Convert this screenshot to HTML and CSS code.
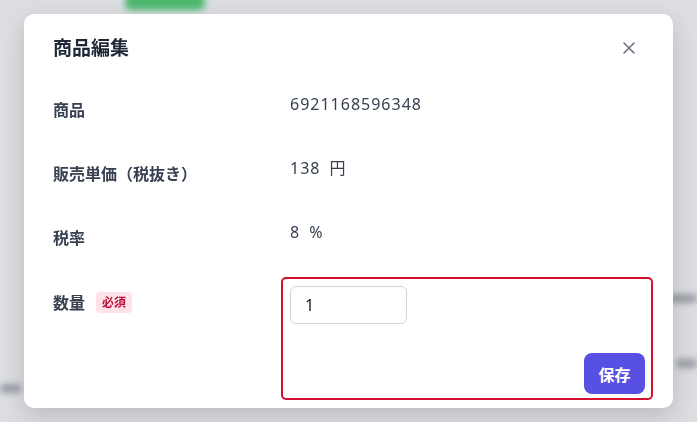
FILE: index.html
```html
<!DOCTYPE html>
<html lang="ja">
<head>
    <meta charset="UTF-8">
    <meta name="viewport" content="width=device-width, initial-scale=1.0">
    <title>商品編集</title>
    <link rel="stylesheet" href="styles.css">
</head>
<body>

    <!-- 背景のページ -->
    <div class="page">
        <div class="page-top">
            <span class="page-btn"></span>
        </div>
        <div class="page-line line-a"></div>
        <div class="page-line line-b"></div>
        <div class="page-line line-c"></div>
    </div>

    <!-- モーダル -->
    <div class="overlay">
        <div class="modal">
            <div class="modal-header">
                <h2>商品編集</h2>
                <button class="close-btn" aria-label="閉じる">
                    <svg width="14" height="14" viewBox="0 0 14 14">
                        <path d="M2 2 L12 12 M12 2 L2 12" stroke="#6b7280" stroke-width="1.6" stroke-linecap="round" fill="none"/>
                    </svg>
                </button>
            </div>

            <div class="form-grid">
                <div class="label">商品</div>
                <div class="value">6921168596348</div>

                <div class="label">販売単価（税抜き）</div>
                <div class="value">138<span class="unit">円</span></div>

                <div class="label">税率</div>
                <div class="value">8<span class="unit">%</span></div>

                <div class="label">数量 <span class="badge">必須</span></div>
                <div class="field-box">
                    <input type="text" class="qty-input" value="1">
                    <button class="save-btn">保存</button>
                </div>
            </div>
        </div>
    </div>

</body>
</html>
```

FILE: styles.css
```css
body {
    margin: 0;
    font-family: "Noto Sans", "Noto Sans CJK JP", sans-serif;
    background-color: #dcdee2;
    color: #374151;
    overflow: hidden;
}

/* 背景のページ */
.page {
    height: 422px;
    filter: blur(3px);
}

.page-top {
    height: 30px;
    padding-left: 125px;
}

.page-btn {
    display: block;
    width: 80px;
    height: 16px;
    margin-top: -6px;
    background-color: #4cb96f;
    border-radius: 6px;
}

.page-line {
    height: 9px;
    background-color: #9a9da4;
    border-radius: 4px;
}

.line-a {
    margin: 270px 0 0 668px;
}

.line-b {
    margin: 56px 0 0 676px;
}

.line-c {
    margin: 16px 676px 0 0;
}

/* モーダル */
.overlay {
    position: fixed;
    inset: 0;
    display: flex;
    align-items: center;
    justify-content: center;
}

.modal {
    width: 649px;
    height: 394px;
    box-sizing: border-box;
    background-color: #fff;
    border-radius: 10px;
    box-shadow: 0 8px 24px rgba(0, 0, 0, 0.16);
    padding: 22px 20px 8px 29px;
}

.modal-header {
    display: flex;
    justify-content: space-between;
    align-items: center;
    height: 24px;
}

.modal-header h2 {
    margin: 0;
    font-size: 19px;
    font-weight: 700;
    color: #1f2937;
    line-height: 24px;
}

.close-btn {
    width: 32px;
    height: 32px;
    margin-right: 8px;
    padding: 0;
    border: none;
    background: none;
    display: flex;
    align-items: center;
    justify-content: center;
}

.form-grid {
    display: grid;
    grid-template-columns: 237px 1fr;
    grid-auto-rows: 64px;
    margin-top: 34px;
}

.label {
    padding-top: 6px;
    font-size: 16px;
    font-weight: 700;
    line-height: 20px;
    color: #374151;
    display: flex;
    align-items: center;
    align-self: start;
    gap: 11px;
}

.badge {
    display: inline-block;
    height: 21px;
    line-height: 21px;
    padding: 0 6px;
    font-size: 12px;
    font-weight: 700;
    color: #be123c;
    background-color: #fde2e7;
    border-radius: 4px;
}

.value {
    font-size: 16px;
    line-height: 20px;
    letter-spacing: 1px;
    color: #374151;
}

.unit {
    margin-left: 9px;
}

.field-box {
    margin: -9px 0 0 -9px;
    padding: 7px 6px 4px 7px;
    border: 2px solid #d3102e;
    border-radius: 5px;
    display: flex;
    flex-direction: column;
    align-items: flex-start;
    height: 123px;
    box-sizing: border-box;
}

.qty-input {
    width: 117px;
    height: 38px;
    box-sizing: border-box;
    padding: 0 14px;
    font-family: "Noto Sans", sans-serif;
    font-size: 16px;
    color: #111827;
    border: 1px solid #d1d5db;
    border-radius: 6px;
    outline: none;
}

.save-btn {
    align-self: flex-end;
    margin-top: 29px;
    width: 61px;
    height: 41px;
    font-family: "Noto Sans CJK JP", sans-serif;
    font-size: 16px;
    font-weight: 700;
    color: #fff;
    background-color: #5850e2;
    border: none;
    border-radius: 8px;
}
```
